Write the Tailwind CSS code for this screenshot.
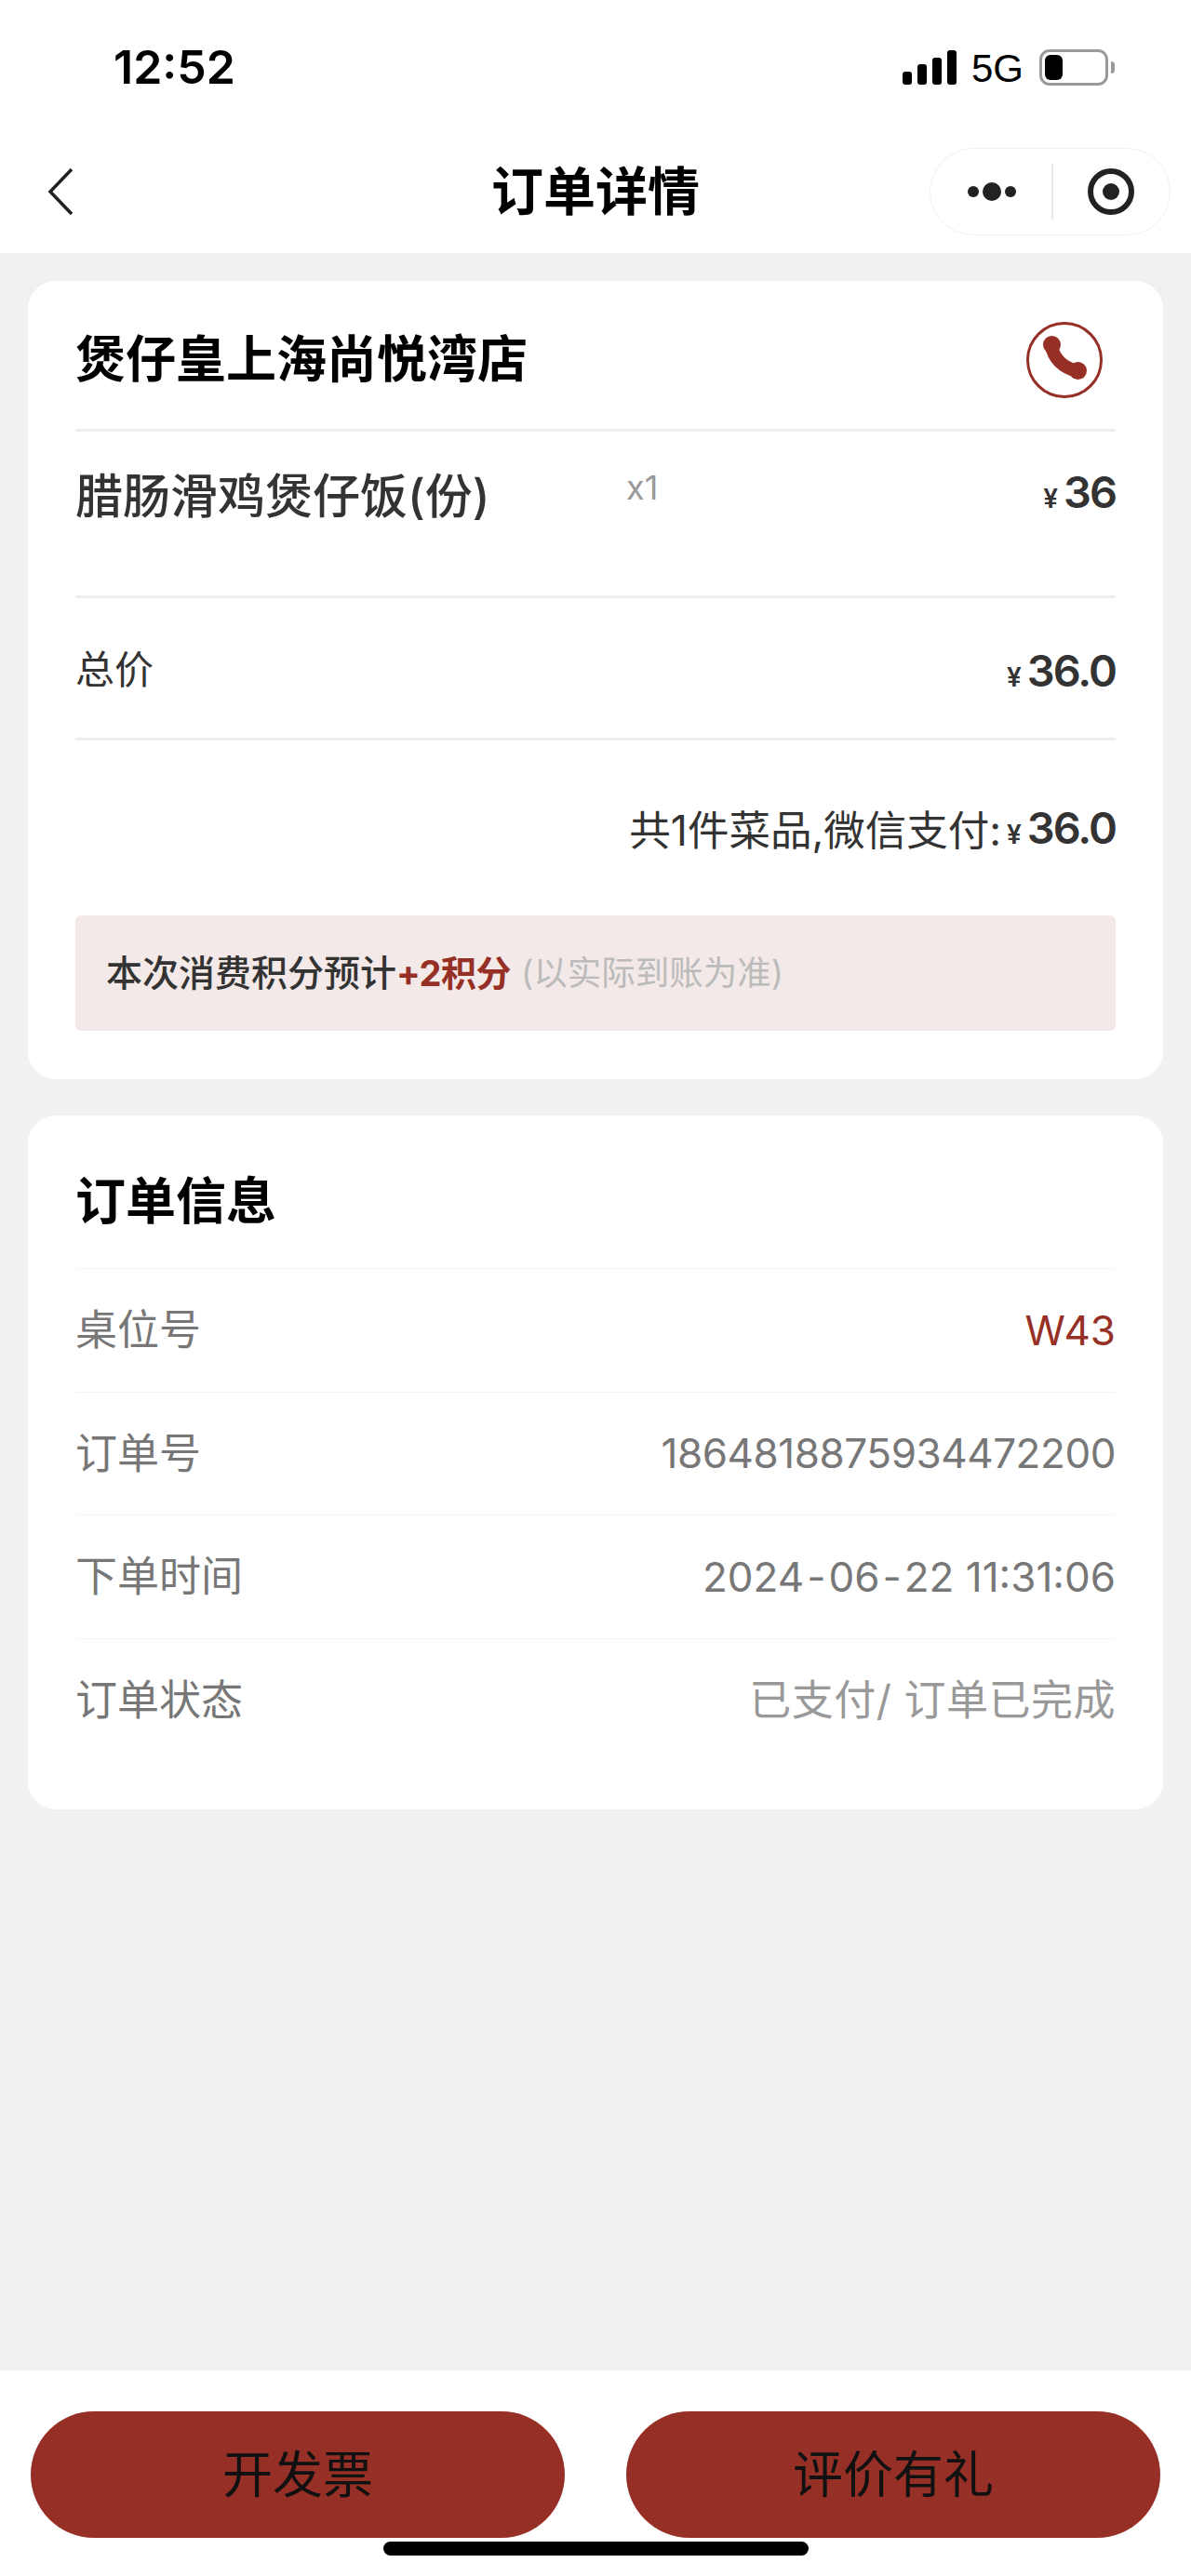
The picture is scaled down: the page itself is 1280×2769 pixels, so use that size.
<!DOCTYPE html>
<html lang="zh-CN">
<head>
    <meta charset="UTF-8">
    <meta name="viewport" content="width=device-width, initial-scale=1.0">
    <title>订单详情</title>
    <script src="https://cdn.jsdelivr.net/npm/@tailwindcss/browser@4"></script>
</head>
<body class="bg-[#f1f1f1]">
    <div class="relative w-[1280px] h-[2769px] flex flex-col font-['Inter','Noto_Sans_CJK_SC',sans-serif] text-[#333]">
        <!-- Status bar -->
        <div class="h-[136px] shrink-0 bg-white flex items-start justify-between pt-[44px] pl-[122px] pr-[82px]">
            <span class="text-[50px] leading-[56px] font-semibold text-black">12:52</span>
            <div class="flex items-start">
                <div class="flex items-end gap-[6px] h-[37px] mt-[10px]">
                    <span class="w-[10px] h-[14px] rounded-[3px] bg-black"></span>
                    <span class="w-[10px] h-[22px] rounded-[3px] bg-black"></span>
                    <span class="w-[10px] h-[29px] rounded-[3px] bg-black"></span>
                    <span class="w-[10px] h-[37px] rounded-[3px] bg-black"></span>
                </div>
                <span class="ml-[16px] text-[42px] leading-[48px] mt-[6px] font-['Liberation_Sans',sans-serif] text-black">5G</span>
                <div class="ml-[17px] mt-[9px] w-[74px] h-[39px] border-[3px] border-[#999] rounded-[11px] p-[3px]">
                    <div class="w-[19px] h-[27px] rounded-[6px] bg-black"></div>
                </div>
                <span class="ml-[3px] mt-[22px] w-[4px] h-[13px] bg-[#999] rounded-r-full"></span>
            </div>
        </div>

        <!-- Nav -->
        <div class="relative h-[136px] shrink-0 bg-white flex items-center justify-between pl-[50px] pr-[22px] pt-[4px]">
            <svg width="30" height="52" viewBox="0 0 30 52" fill="none"><path d="M27 2 L4 26 L27 50" stroke="#222" stroke-width="3.5"/></svg>
            <h1 class="absolute left-0 right-0 text-center text-[56px] leading-[64px] font-bold text-black">订单详情</h1>
            <div class="w-[259px] h-[94px] rounded-full border border-[#f0f0f0] bg-white flex items-center">
                <div class="w-[130px] flex items-center justify-center gap-[4px] pl-[2px]">
                    <span class="w-[12px] h-[12px] rounded-full bg-[#222]"></span>
                    <span class="w-[20px] h-[20px] rounded-full bg-[#222]"></span>
                    <span class="w-[12px] h-[12px] rounded-full bg-[#222]"></span>
                </div>
                <span class="w-[2px] h-[60px] bg-[#e8e8e8]"></span>
                <div class="flex-1 flex items-center justify-center pr-[2px]">
                    <svg width="50" height="50" viewBox="0 0 50 50"><circle cx="25" cy="25" r="22" fill="none" stroke="#222" stroke-width="6"/><circle cx="25" cy="25" r="9" fill="#222"/></svg>
                </div>
            </div>
        </div>

        <!-- Content -->
        <main class="flex-1 px-[30px] pt-[30px] flex flex-col gap-[39px]">
            <section class="bg-white rounded-[30px] px-[51px] pb-[52px]">
                <div class="h-[162px] pt-[10px] flex items-center justify-between border-b-[3px] border-[#eee]">
                    <h2 class="text-[54px] leading-[64px] font-bold text-black">煲仔皇上海尚悦湾店</h2>
                    <svg class="mr-[14px]" width="82" height="82" viewBox="0 0 82 82" fill="none">
                        <circle cx="41" cy="41" r="39.5" stroke="#962f25" stroke-width="3"/>
                        <path d="M27 25 C29 39 39 49 55 53" stroke="#962f25" stroke-width="14" stroke-linecap="round"/>
                        <circle cx="27.5" cy="24.5" r="9.5" fill="#962f25"/>
                        <circle cx="55.5" cy="52.5" r="9.5" fill="#962f25"/>
                    </svg>
                </div>
                <div class="h-[179px] grid grid-cols-[592px_1fr_auto] items-start pt-[38px] border-b-[3px] border-[#eee]">
                    <span class="text-[51px] leading-[64px] font-medium">腊肠滑鸡煲仔饭(份)</span>
                    <span class="text-[36px] leading-[44px] text-[#999]">x1</span>
                    <span class="text-[47px] leading-[52px] font-semibold tracking-[-2px] mt-[1px]"><span class="text-[28px] mr-[6px] tracking-normal">¥</span>36</span>
                </div>
                <div class="h-[153px] pt-[4px] flex items-center justify-between border-b-[3px] border-[#eee]">
                    <span class="text-[42px] leading-[48px]">总价</span>
                    <span class="text-[47px] leading-[52px] font-semibold tracking-[-2px] mt-[8px]"><span class="text-[28px] mr-[6px] tracking-normal">¥</span>36.0</span>
                </div>
                <div class="h-[188px] pt-[6px] flex items-center justify-end">
                    <span class="text-[44.5px] leading-[52px] font-normal">共1件菜品,微信支付:</span>
                    <span class="text-[47px] leading-[52px] font-semibold tracking-[-2px]"><span class="text-[28px] mx-[6px] tracking-normal">¥</span>36.0</span>
                </div>
                <div class="h-[124px] bg-[#f3e9e8] rounded-[6px] pl-[33px] flex items-center text-[39px] font-medium">
                    <span>本次消费积分预计</span>
                    <span class="text-[38px] font-bold tracking-[-0.5px] text-[#962f25]">+2积分</span>
                    <span class="ml-[11px] text-[36.5px] font-normal text-[#bbb]">(以实际到账为准)</span>
                </div>
            </section>

            <section class="bg-white rounded-[30px] px-[51px] pb-[52px]">
                <h2 class="h-[164px] pt-[20px] flex items-center text-[54px] font-bold text-black">订单信息</h2>
                <div class="h-[132.5px] flex items-center justify-between border-t border-[#f5f5f5] text-[45px] text-[#777]">
                    <span>桌位号</span>
                    <span class="text-[44px] text-[#962f25]">W43</span>
                </div>
                <div class="h-[132.5px] flex items-center justify-between border-t border-[#f5f5f5] text-[45px] text-[#777]">
                    <span>订单号</span>
                    <span class="text-[44px] tracking-[-0.45px]">1864818875934472200</span>
                </div>
                <div class="h-[132.5px] flex items-center justify-between border-t border-[#f5f5f5] text-[45px] text-[#777]">
                    <span>下单时间</span>
                    <span class="text-[44px]">2024<span class="px-[3px]">-</span>06<span class="px-[3px]">-</span>22 11:31:06</span>
                </div>
                <div class="h-[132.5px] flex items-center justify-between border-t border-[#f5f5f5] text-[45px] text-[#777]">
                    <span>订单状态</span>
                    <span class="tracking-[0.5px] text-[#999]">已支付/ 订单已完成</span>
                </div>
            </section>
        </main>

        <!-- Bottom actions -->
        <footer class="h-[221px] shrink-0 bg-white pt-[44px] pl-[33px] pr-[33px] flex justify-between">
            <button class="w-[574px] h-[136px] rounded-full bg-[#962f25] text-[54px] text-[#111]">开发票</button>
            <button class="w-[574px] h-[136px] rounded-full bg-[#962f25] text-[54px] text-[#111]">评价有礼</button>
        </footer>

        <!-- Home indicator -->
        <div class="absolute left-[412px] top-[2732px] w-[457px] h-[15px] rounded-full bg-black"></div>
    </div>
</body>
</html>
